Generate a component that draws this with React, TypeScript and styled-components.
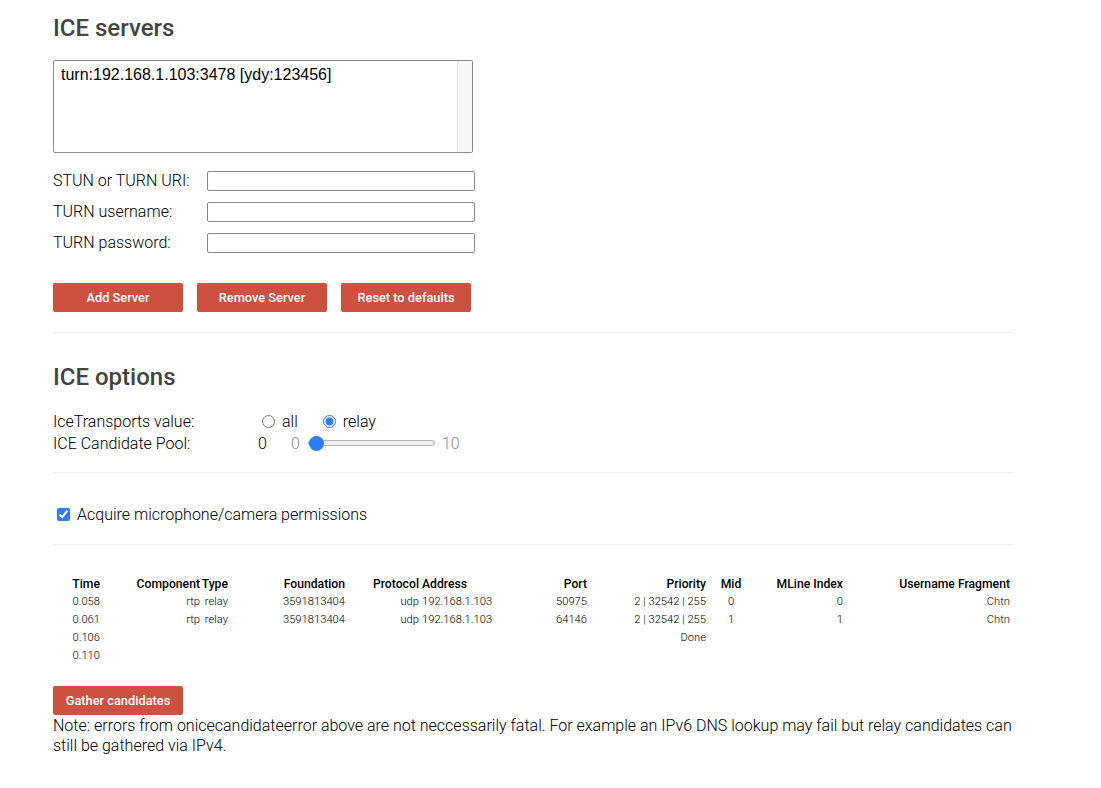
import React from 'react';
import styled, { createGlobalStyle } from 'styled-components';

const GlobalStyle = createGlobalStyle`
  html, body {
    margin: 0;
    padding: 0;
    background: #fff;
  }
  body {
    font-family: Roboto, 'Noto Sans', sans-serif;
    font-weight: 300;
    color: #000;
  }
`;

const Container = styled.div`
  width: 960px;
  padding: 14px 0 40px 53px;
`;

const Heading = styled.h2<{ $gap: number }>`
  margin: 0 0 ${(p) => p.$gap}px 0;
  color: #444;
  font-size: 24px;
  font-weight: 500;
  line-height: 29px;
`;

const ServerList = styled.div`
  box-sizing: border-box;
  display: flex;
  width: 420px;
  height: 93px;
  border: 1px solid #8a8a8a;
  border-radius: 2px;
  overflow: hidden;
`;

const ServerOptions = styled.div`
  flex: 1;
  padding: 4px 7px;
  font-family: 'Liberation Sans', Arial, sans-serif;
  font-weight: 400;
  font-size: 16px;
  line-height: 19px;
`;

const ScrollTrack = styled.div`
  width: 14px;
  background: #f7f7f7;
  border-left: 1px solid #e8e8e8;
`;

const Fields = styled.div`
  display: flex;
  flex-direction: column;
  gap: 11px;
  margin-top: 18px;
`;

const FieldRow = styled.div`
  display: flex;
  align-items: center;
  height: 20px;
  font-size: 16px;
`;

const FieldLabel = styled.label`
  width: 154px;
  margin-top: -2px;
`;

const TextInput = styled.input`
  box-sizing: border-box;
  width: 268px;
  height: 20px;
  margin: 0;
  padding: 1px 3px;
  border: 1px solid #8a8a8a;
  border-radius: 2px;
  font-family: Roboto, sans-serif;
  font-size: 13px;
`;

const ButtonRow = styled.div`
  display: flex;
  gap: 14px;
  margin: 30px 0 20px 0;
`;

const Button = styled.button`
  box-sizing: border-box;
  width: 130px;
  height: 29px;
  margin: 0;
  padding: 0;
  border: none;
  border-radius: 2px;
  background: #cd5040;
  color: #fff;
  font-family: Roboto, sans-serif;
  font-weight: 500;
  font-size: 12.8px;
  cursor: pointer;
`;

const Rule = styled.hr<{ $after: number }>`
  margin: 0 0 ${(p) => p.$after}px 0;
  height: 0;
  border: none;
  border-top: 1px solid #eee;
`;

const Options = styled.div`
  display: flex;
  flex-direction: column;
  margin-bottom: 18px;
`;

const OptionRow = styled.div`
  display: flex;
  align-items: center;
  height: 22px;
  font-size: 16px;
`;

const OptionLabel = styled.span<{ $width: number }>`
  width: ${(p) => p.$width}px;
`;

const Radio = styled.input`
  width: 13px;
  height: 13px;
  margin: 0 7px 0 0;
  accent-color: #2e7cf6;
`;

const RadioText = styled.span`
  margin-right: 25px;
`;

const Muted = styled.span`
  color: #8d8d8d;
`;

const Value = styled.span`
  width: 33px;
`;

const Slider = styled.input`
  -webkit-appearance: none;
  appearance: none;
  width: 127px;
  height: 15px;
  margin: 0 7px 0 8px;
  padding: 0;
  background: transparent;

  &::-webkit-slider-runnable-track {
    box-sizing: border-box;
    height: 6px;
    background: #efefef;
    border: 1px solid #b4b4b4;
    border-radius: 3px;
  }
  &::-webkit-slider-thumb {
    -webkit-appearance: none;
    width: 15px;
    height: 15px;
    margin-top: -5.5px;
    border-radius: 50%;
    background: #2e7cf6;
    border: none;
  }
`;

const CheckRow = styled.label`
  display: flex;
  align-items: center;
  height: 22px;
  margin-bottom: 19px;
  padding-left: 4px;
  font-size: 16px;
`;

const Checkbox = styled.input`
  width: 13px;
  height: 13px;
  margin: 0 7px 0 0;
  accent-color: #2e7cf6;
`;

const Table = styled.table`
  table-layout: fixed;
  width: 957px;
  border-collapse: collapse;
  border-spacing: 0;
  font-size: 11.2px;
  line-height: 18px;
  margin: 4px 0 21px 0;
`;

const Th = styled.th<{ $align: string }>`
  padding: 0;
  font-size: 12.2px;
  font-weight: 500;
  text-align: ${(p) => p.$align};
  white-space: nowrap;
`;

const Td = styled.td<{ $align: string }>`
  padding: 0;
  font-weight: 300;
  text-align: ${(p) => p.$align};
  white-space: nowrap;
`;

const Note = styled.p`
  margin: 1px 0 0 0;
  font-size: 16px;
  line-height: 20px;
`;

const columns = [
  { title: 'Time', width: 47, align: 'right' },
  { title: 'Component', width: 100, align: 'right' },
  { title: 'Type', width: 28, align: 'right' },
  { title: 'Foundation', width: 117, align: 'right' },
  { title: 'Protocol', width: 74, align: 'right' },
  { title: 'Address', width: 81, align: 'left', pad: 3 },
  { title: 'Port', width: 87, align: 'right' },
  { title: 'Priority', width: 119, align: 'right' },
  { title: 'Mid', width: 50, align: 'center' },
  { title: 'MLine Index', width: 87, align: 'right' },
  { title: 'Username Fragment', width: 167, align: 'right' },
];

const rows: string[][] = [
  ['0.058', 'rtp', 'relay', '3591813404', 'udp', '192.168.1.103', '50975', '2 | 32542 | 255', '0', '0', 'Chtn'],
  ['0.061', 'rtp', 'relay', '3591813404', 'udp', '192.168.1.103', '64146', '2 | 32542 | 255', '1', '1', 'Chtn'],
  ['0.106', '', '', '', '', '', '', 'Done', '', '', ''],
  ['0.110', '', '', '', '', '', '', '', '', '', ''],
];

export default function App() {
  return (
    <>
      <GlobalStyle />
      <Container>
        <Heading $gap={17}>ICE servers</Heading>
        <ServerList>
          <ServerOptions>turn:192.168.1.103:3478 [ydy:123456]</ServerOptions>
          <ScrollTrack />
        </ServerList>

        <Fields>
          <FieldRow>
            <FieldLabel htmlFor="url">STUN or TURN URI:</FieldLabel>
            <TextInput id="url" />
          </FieldRow>
          <FieldRow>
            <FieldLabel htmlFor="username">TURN username:</FieldLabel>
            <TextInput id="username" />
          </FieldRow>
          <FieldRow>
            <FieldLabel htmlFor="password">TURN password:</FieldLabel>
            <TextInput id="password" />
          </FieldRow>
        </Fields>

        <ButtonRow>
          <Button>Add Server</Button>
          <Button>Remove Server</Button>
          <Button>Reset to defaults</Button>
        </ButtonRow>

        <Rule $after={30} />

        <Heading $gap={18}>ICE options</Heading>
        <Options>
          <OptionRow>
            <OptionLabel $width={209}>IceTransports value:</OptionLabel>
            <Radio type="radio" name="transports" />
            <RadioText>all</RadioText>
            <Radio type="radio" name="transports" defaultChecked />
            <span>relay</span>
          </OptionRow>
          <OptionRow>
            <OptionLabel $width={205}>ICE Candidate Pool:</OptionLabel>
            <Value>0</Value>
            <Muted>0</Muted>
            <Slider type="range" min={0} max={10} defaultValue={0} />
            <Muted>10</Muted>
          </OptionRow>
        </Options>

        <Rule $after={30} />

        <CheckRow>
          <Checkbox type="checkbox" defaultChecked />
          Acquire microphone/camera permissions
        </CheckRow>

        <Rule $after={30} />

        <Table>
          <colgroup>
            {columns.map((c) => (
              <col key={c.title} style={{ width: c.width }} />
            ))}
          </colgroup>
          <thead>
            <tr>
              {columns.map((c) => (
                <Th key={c.title} $align={c.align} style={c.pad ? { paddingLeft: c.pad } : undefined}>
                  {c.title}
                </Th>
              ))}
            </tr>
          </thead>
          <tbody>
            {rows.map((r, i) => (
              <tr key={i}>
                {r.map((cell, j) => (
                  <Td key={j} $align={columns[j].align} style={columns[j].pad ? { paddingLeft: columns[j].pad } : undefined}>
                    {cell}
                  </Td>
                ))}
              </tr>
            ))}
          </tbody>
        </Table>

        <Button>Gather candidates</Button>
        <Note>
          Note: errors from onicecandidateerror above are not neccessarily fatal. For example an IPv6 DNS lookup may
          fail but relay candidates can still be gathered via IPv4.
        </Note>
      </Container>
    </>
  );
}
